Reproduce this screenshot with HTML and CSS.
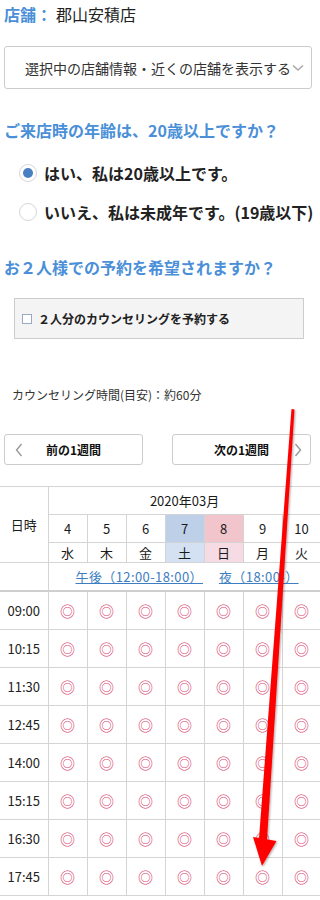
FILE: index.html
```html
<!DOCTYPE html>
<html lang="ja">
<head>
<meta charset="utf-8">
<link rel="stylesheet" href="styles.css">
</head>
<body>
<div class="page">
  <div class="store"><span class="store-label">店舗：</span><span class="store-name">郡山安積店</span></div>
  <div class="select">
    <span class="select-text">選択中の店舗情報・近くの店舗を表示する</span>
    <svg class="select-chev" width="12" height="8" viewBox="0 0 12 8"><path d="M1 1.5 L6 6 L11 1.5" fill="none" stroke="#aaa" stroke-width="1.6"/></svg>
  </div>

  <h2 class="q q1">ご来店時の年齢は、20歳以上ですか？</h2>
  <div class="radio-row r1"><span class="radio checked"></span><span class="radio-text">はい、私は20歳以上です。</span></div>
  <div class="radio-row r2"><span class="radio"></span><span class="radio-text">いいえ、私は未成年です。(19歳以下)</span></div>

  <h2 class="q q2">お２人様での予約を希望されますか？</h2>
  <div class="pair"><span class="cbox"></span><span class="pair-text">２人分のカウンセリングを予約する</span></div>

  <p class="note">カウンセリング時間(目安)：約60分</p>

  <div class="weeks">
    <div class="wbtn"><svg class="wchev left" width="8" height="14" viewBox="0 0 8 14"><path d="M6.5 1 L1.5 7 L6.5 13" fill="none" stroke="#999" stroke-width="1.4"/></svg>前の1週間</div>
    <div class="wbtn"><svg class="wchev right" width="8" height="14" viewBox="0 0 8 14"><path d="M1.5 1 L6.5 7 L1.5 13" fill="none" stroke="#999" stroke-width="1.4"/></svg>次の1週間</div>
  </div>

  <table class="cal">
    <colgroup><col class="c0"><col class="cd"><col class="cd"><col class="cd"><col class="cd"><col class="cd"><col class="cd"><col class="cd"></colgroup>
    <tr class="h-month"><th rowspan="3" class="nichiji">日時</th><th colspan="7">2020年03月</th></tr>
    <tr class="h-date"><th>4</th><th>5</th><th>6</th><th class="sat">7</th><th class="sun">8</th><th>9</th><th>10</th></tr>
    <tr class="h-day"><th>水</th><th>木</th><th>金</th><th class="sat2">土</th><th class="sun2">日</th><th>月</th><th>火</th></tr>
    <tr class="h-range"><th></th><th colspan="7" class="range"><div class="range-in"><a class="rl">午後（12:00-18:00）</a><a class="rl">夜（18:00-）</a></div></th></tr>
    <tr><td class="t">09:00</td><td>◎</td><td>◎</td><td>◎</td><td>◎</td><td>◎</td><td>◎</td><td>◎</td></tr>
    <tr><td class="t">10:15</td><td>◎</td><td>◎</td><td>◎</td><td>◎</td><td>◎</td><td>◎</td><td>◎</td></tr>
    <tr><td class="t">11:30</td><td>◎</td><td>◎</td><td>◎</td><td>◎</td><td>◎</td><td>◎</td><td>◎</td></tr>
    <tr><td class="t">12:45</td><td>◎</td><td>◎</td><td>◎</td><td>◎</td><td>◎</td><td>◎</td><td>◎</td></tr>
    <tr><td class="t">14:00</td><td>◎</td><td>◎</td><td>◎</td><td>◎</td><td>◎</td><td>◎</td><td>◎</td></tr>
    <tr><td class="t">15:15</td><td>◎</td><td>◎</td><td>◎</td><td>◎</td><td>◎</td><td>◎</td><td>◎</td></tr>
    <tr><td class="t">16:30</td><td>◎</td><td>◎</td><td>◎</td><td>◎</td><td>◎</td><td>◎</td><td>◎</td></tr>
    <tr><td class="t">17:45</td><td>◎</td><td>◎</td><td>◎</td><td>◎</td><td>◎</td><td>◎</td><td>◎</td></tr>
  </table>

  <svg class="arrow" width="320" height="900" viewBox="0 0 320 900">
    <defs><filter id="sh" x="-50%" y="-10%" width="200%" height="120%"><feDropShadow dx="1" dy="1" stdDeviation="1.2" flood-color="#000" flood-opacity="0.35"/></filter></defs>
    <g filter="url(#sh)">
      <polygon points="291.5,409 294.5,409.5 267,840 259,839" fill="#ff0000"/>
      <polygon points="253,837 276.5,841 262,866" fill="#ff0000"/>
    </g>
  </svg>
</div>
</body>
</html>
```
FILE: styles.css
```css
html, body {
  margin: 0;
  padding: 0;
  background: #fff;
}
body {
  width: 320px;
  overflow-x: hidden;
  font-family: "Noto Sans CJK JP", "Noto Sans", sans-serif;
  color: #222;
}
.page {
  position: relative;
  width: 320px;
  height: 900px;
  overflow: hidden;
}
.store {
  padding: 0 0 0 4px;
  height: 28px;
  line-height: 28px;
  font-size: 16px;
}
.store-label {
  color: #4a8fd8;
  font-weight: bold;
}
.store-name {
  color: #222;
  margin-left: 4px;
}
.select {
  margin: 18px 0 0 4px;
  width: 308px;
  height: 43px;
  box-sizing: border-box;
  border: 1px solid #ccc;
  border-radius: 3px;
  display: flex;
  align-items: center;
  padding-left: 20px;
  font-size: 14px;
  color: #333;
  white-space: nowrap;
}
.select-chev {
  margin-left: 1px;
  flex: none;
}
.q {
  margin: 0;
  padding-left: 4px;
  font-size: 16px;
  font-weight: bold;
  color: #4a8fd8;
  line-height: 22px;
  white-space: nowrap;
}
.q1 { margin-top: 30px; }
.radio-row {
  display: flex;
  align-items: center;
  padding-left: 19px;
  height: 22px;
  white-space: nowrap;
}
.r1 { margin-top: 21px; }
.r2 { margin-top: 17px; }
.radio {
  width: 18px;
  height: 18px;
  box-sizing: border-box;
  border: 1px solid #d6d6d6;
  border-radius: 50%;
  background: #fff;
  flex: none;
  position: relative;
}
.radio.checked::after {
  content: "";
  position: absolute;
  left: 3px;
  top: 3px;
  width: 10px;
  height: 10px;
  border-radius: 50%;
  background: #4a7fc1;
}
.radio-text {
  margin-left: 7px;
  font-size: 16px;
  font-weight: bold;
  color: #222;
}
.q2 { margin-top: 33px; }
.pair {
  margin: 20px 0 0 14px;
  width: 290px;
  height: 41px;
  box-sizing: border-box;
  border: 1px solid #ccc;
  background: #f4f4f4;
  display: flex;
  align-items: center;
  padding-left: 7px;
  white-space: nowrap;
}
.cbox {
  width: 8px;
  height: 8px;
  border: 1px solid #99a8c4;
  background: #fff;
  flex: none;
}
.pair-text {
  margin-left: 6px;
  font-size: 12px;
  font-weight: bold;
  color: #222;
}
.note {
  margin: 47px 0 0 12px;
  font-size: 12px;
  line-height: 18px;
  color: #333;
}
.weeks {
  margin: 30px 0 0 4px;
  display: flex;
  gap: 29px;
}
.wbtn {
  position: relative;
  width: 139px;
  height: 31px;
  box-sizing: border-box;
  border: 1px solid #ccc;
  border-radius: 3px;
  display: flex;
  align-items: center;
  justify-content: center;
  font-size: 12px;
  font-weight: bold;
  color: #111;
}
.wchev {
  position: absolute;
  top: 8px;
}
.wchev.left { left: 10px; }
.wchev.right { right: 8px; }
.cal {
  margin-top: 21px;
  border-collapse: collapse;
  table-layout: fixed;
  width: 321px;
  font-size: 13px;
}
.c0 { width: 48px; }
.cd { width: 39px; }
.cal th, .cal td {
  border: 1px solid #d4d4d4;
  padding: 0;
  text-align: center;
  font-weight: normal;
  color: #1a1a1a;
}
.cal tr > :first-child { border-left: none; }
.h-month th { height: 27px; }
.nichiji { font-size: 13px; }
.h-date th { height: 27px; font-size: 13px; }
.h-day th { height: 19px; font-size: 13px; line-height: 19px; }
.sat { background: #bdd0e8; }
.sun { background: #f2c4cc; }
.sat2 { background: #d3e1f2; }
.sun2 { background: #f6dbe4; }
.h-range th {
  height: 27px;
  border-bottom: 2px solid #cfcfcf;
}
.range { overflow: hidden; }
.range-in {
  display: flex;
  white-space: nowrap;
  padding-left: 27px;
  gap: 16px;
}
.rl {
  color: #3d7ec2;
  text-decoration: underline;
  font-size: 13px;
  letter-spacing: 0.4px;
}
.cal td {
  height: 37px;
  color: #d9456e;
  font-size: 15px;
}
.cal td.t {
  color: #222;
  font-size: 13px;
}
.arrow {
  position: absolute;
  left: 0;
  top: 0;
  pointer-events: none;
}
```
